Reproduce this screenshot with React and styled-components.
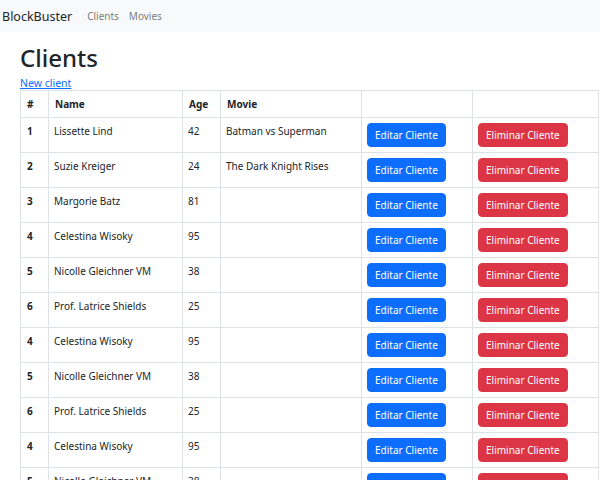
import React from "react";
import styled, { createGlobalStyle } from "styled-components";

const clients = [
  { id: 1, name: "Lissette Lind", age: 42, movie: "Batman vs Superman" },
  { id: 2, name: "Suzie Kreiger", age: 24, movie: "The Dark Knight Rises" },
  { id: 3, name: "Margorie Batz", age: 81, movie: "" },
  { id: 4, name: "Celestina Wisoky", age: 95, movie: "" },
  { id: 5, name: "Nicolle Gleichner VM", age: 38, movie: "" },
  { id: 6, name: "Prof. Latrice Shields", age: 25, movie: "" },
  { id: 4, name: "Celestina Wisoky", age: 95, movie: "" },
  { id: 5, name: "Nicolle Gleichner VM", age: 38, movie: "" },
  { id: 6, name: "Prof. Latrice Shields", age: 25, movie: "" },
  { id: 4, name: "Celestina Wisoky", age: 95, movie: "" },
  { id: 5, name: "Nicolle Gleichner VM", age: 38, movie: "" },
  { id: 6, name: "Prof. Latrice Shields", age: 25, movie: "" },
];

const App = () => {
  return (
    <>
      <GlobalStyle />
      <Navbar>
        <Brand>BlockBuster</Brand>
        <NavLink>Clients</NavLink>
        <NavLink>Movies</NavLink>
      </Navbar>
      <Container>
        <Title>Clients</Title>
        <NewLink href="#">New client</NewLink>
        <Table>
          <thead>
            <tr>
              <Th $w={28}>#</Th>
              <Th $w={134}>Name</Th>
              <Th $w={38}>Age</Th>
              <Th $w={141}>Movie</Th>
              <Th $w={111}></Th>
              <Th $w={126}></Th>
            </tr>
          </thead>
          <tbody>
            {clients.map((c, i) => (
              <tr key={i}>
                <Th as="td">{c.id}</Th>
                <Td>{c.name}</Td>
                <Td>{c.age}</Td>
                <Td>{c.movie}</Td>
                <Td>
                  <Button $color="#0d6efd">Editar Cliente</Button>
                </Td>
                <Td>
                  <Button $color="#dc3545">Eliminar Cliente</Button>
                </Td>
              </tr>
            ))}
          </tbody>
        </Table>
      </Container>
    </>
  );
};

const GlobalStyle = createGlobalStyle`
  body {
    margin: 0;
    font-family: "Noto Sans", "Open Sans", sans-serif;
    font-size: 10px;
    color: #212529;
    background: #fff;
  }
`;

const Navbar = styled.nav`
  display: flex;
  align-items: center;
  height: 32px;
  padding: 0 2px;
  background: #f8f9fa;
`;

const Brand = styled.span`
  font-size: 12.5px;
  color: #212529;
  margin-right: 15px;
`;

const NavLink = styled.span`
  font-size: 10px;
  color: rgba(0, 0, 0, 0.55);
  margin-right: 10px;
`;

const Container = styled.div`
  padding: 0 0 0 20px;
`;

const Title = styled.h1`
  font-size: 24px;
  font-weight: 500;
  line-height: 1.2;
  margin: 12px 0 3px;
`;

const NewLink = styled.a`
  display: block;
  font-size: 10.5px;
  color: #0d6efd;
  text-decoration: underline;
  line-height: 14px;
`;

const Table = styled.table`
  width: 578px;
  border-collapse: collapse;
  table-layout: fixed;
  border: 1px solid #dee2e6;
`;

const Th = styled.th`
  box-sizing: border-box;
  width: ${(p) => (p.$w ? p.$w + "px" : "auto")};
  text-align: left;
  vertical-align: top;
  font-weight: 700;
  padding: 5px 6px;
  line-height: 16px;
  border: 1px solid #dee2e6;
`;

const Td = styled.td`
  box-sizing: border-box;
  vertical-align: top;
  padding: 5px 5px 5px 5px;
  line-height: 16px;
  border: 1px solid #dee2e6;
  white-space: nowrap;
`;

const Button = styled.button`
  height: 24px;
  padding: 0 7px;
  border: 1px solid ${(p) => p.$color};
  border-radius: 4px;
  background: ${(p) => p.$color};
  color: #fff;
  font-family: inherit;
  font-size: 10px;
  cursor: pointer;
`;

export default App;
